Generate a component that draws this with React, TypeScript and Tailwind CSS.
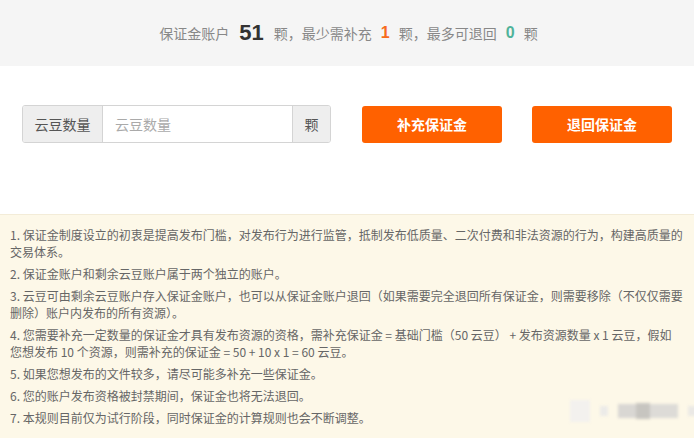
import React from "react";

const items: React.ReactNode[] = [
  "1. 保证金制度设立的初衷是提高发布门槛，对发布行为进行监管，抵制发布低质量、二次付费和非法资源的行为，构建高质量的交易体系。",
  "2. 保证金账户和剩余云豆账户属于两个独立的账户。",
  "3. 云豆可由剩余云豆账户存入保证金账户，也可以从保证金账户退回（如果需要完全退回所有保证金，则需要移除（不仅仅需要删除）账户内发布的所有资源）。",
  <>
    4. 您需要补充一定数量的保证金才具有发布资源的资格，需补充保证金 = 基础门槛（50 云豆） + 发布资源数量 x 1 云豆，假如
    <br />
    您想发布 10 个资源，则需补充的保证金 = 50 + 10 x 1 = 60 云豆。
  </>,
  "5. 如果您想发布的文件较多，请尽可能多补充一些保证金。",
  "6. 您的账户发布资格被封禁期间，保证金也将无法退回。",
  "7. 本规则目前仅为试行阶段，同时保证金的计算规则也会不断调整。",
];

export default function App() {
  return (
    <div
      className="w-[694px] h-[438px] bg-white flex flex-col overflow-hidden relative"
      style={{ fontFamily: '"Microsoft YaHei", "Noto Sans CJK SC", sans-serif' }}
    >
      <div className="h-[66px] bg-[#f5f5f5] flex items-center justify-center text-[14px] text-[#888] pl-[3px]">
        <span>保证金账户</span>
        <span className="text-[22px] font-bold text-[#333] mx-[10px] leading-none" style={{ fontFamily: '"Liberation Sans", Arial, sans-serif' }}>51</span>
        <span>颗，最少需补充</span>
        <span className="text-[16px] font-bold text-[#f76b1c] mx-[9px]" style={{ fontFamily: '"Liberation Sans", Arial, sans-serif' }}>1</span>
        <span>颗，最多可退回</span>
        <span className="text-[16px] font-bold text-[#4fb39a] mx-[9px]" style={{ fontFamily: '"Liberation Sans", Arial, sans-serif' }}>0</span>
        <span>颗</span>
      </div>
      <div className="h-[148px] flex items-start pt-[39px] pl-[22px]">
        <div className="flex h-[38px] border border-[#d4d4d4] rounded-[3px] overflow-hidden text-[14px]">
          <div className="w-[80px] bg-[#eeeeee] border-r border-[#d4d4d4] flex items-center justify-center text-[#555]">云豆数量</div>
          <input
            className="w-[189px] px-[12px] outline-none text-[14px] text-[#555] placeholder:text-[#aaa] bg-white"
            placeholder="云豆数量"
          />
          <div className="w-[38px] bg-[#eeeeee] border-l border-[#d4d4d4] flex items-center justify-center text-[#555]">颗</div>
        </div>
        <button className="ml-[31px] w-[140px] h-[37px] mt-[1px] rounded-[3px] bg-[#ff6100] text-white text-[14px] font-bold">补充保证金</button>
        <button className="ml-[30px] w-[140px] h-[37px] mt-[1px] rounded-[3px] bg-[#ff6100] text-white text-[14px] font-bold">退回保证金</button>
      </div>
      <div className="flex-1 bg-[#fdf8e8] border-t border-[#f3ecd8] px-[10px] pt-[11px] text-[12px] leading-[17px] text-[#666] flex flex-col gap-[5px]">
        {items.map((t, i) => (
          <p key={i}>{t}</p>
        ))}
      </div>
      <div className="absolute left-[570px] top-[400px] flex items-center gap-[10px] blur-[1.5px]">
        <div className="w-[20px] h-[22px] bg-[#f3f1ee]" />
        <div className="w-[8px] h-[10px] bg-[#ecebe8]" />
        <div className="w-[18px] h-[14px] bg-[#d9d7d3]" />
        <div className="w-[14px] h-[16px] bg-[#c7c5c0] -ml-[10px]" />
        <div className="w-[28px] h-[14px] bg-[#dddbd7] -ml-[10px]" />
        <div className="w-[16px] h-[10px] bg-[#ebe9e5]" />
      </div>
    </div>
  );
}
